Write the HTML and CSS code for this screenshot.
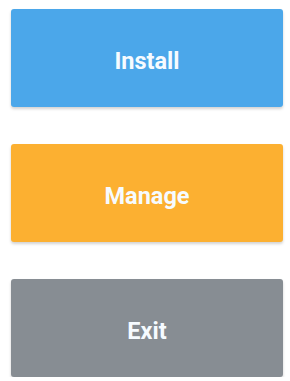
FILE: index.html
```html
<!DOCTYPE html>
<html>
<head>
<meta charset="utf-8">
<link rel="stylesheet" href="styles.css">
</head>
<body>
<div class="menu">
  <button class="btn btn-install">Install</button>
  <button class="btn btn-manage">Manage</button>
  <button class="btn btn-exit">Exit</button>
</div>
</body>
</html>
```
FILE: styles.css
```css
html, body {
  margin: 0;
  padding: 0;
  background: #ffffff;
}
.menu {
  display: flex;
  flex-direction: column;
  gap: 37px;
  padding: 9px 7px 0 11px;
}
.btn {
  height: 98px;
  width: 272px;
  border: none;
  border-radius: 3px;
  color: #f6fbff;
  font-family: Roboto, "Liberation Sans", sans-serif;
  font-weight: 700;
  font-size: 23.5px;
  padding: 5px 0 0 0;
  box-shadow: 0 2px 3px rgba(0, 0, 0, 0.18);
}
.btn-install {
  background: #4ba7ea;
}
.btn-manage {
  background: #fcb031;
}
.btn-exit {
  background: #878d93;
}
```
